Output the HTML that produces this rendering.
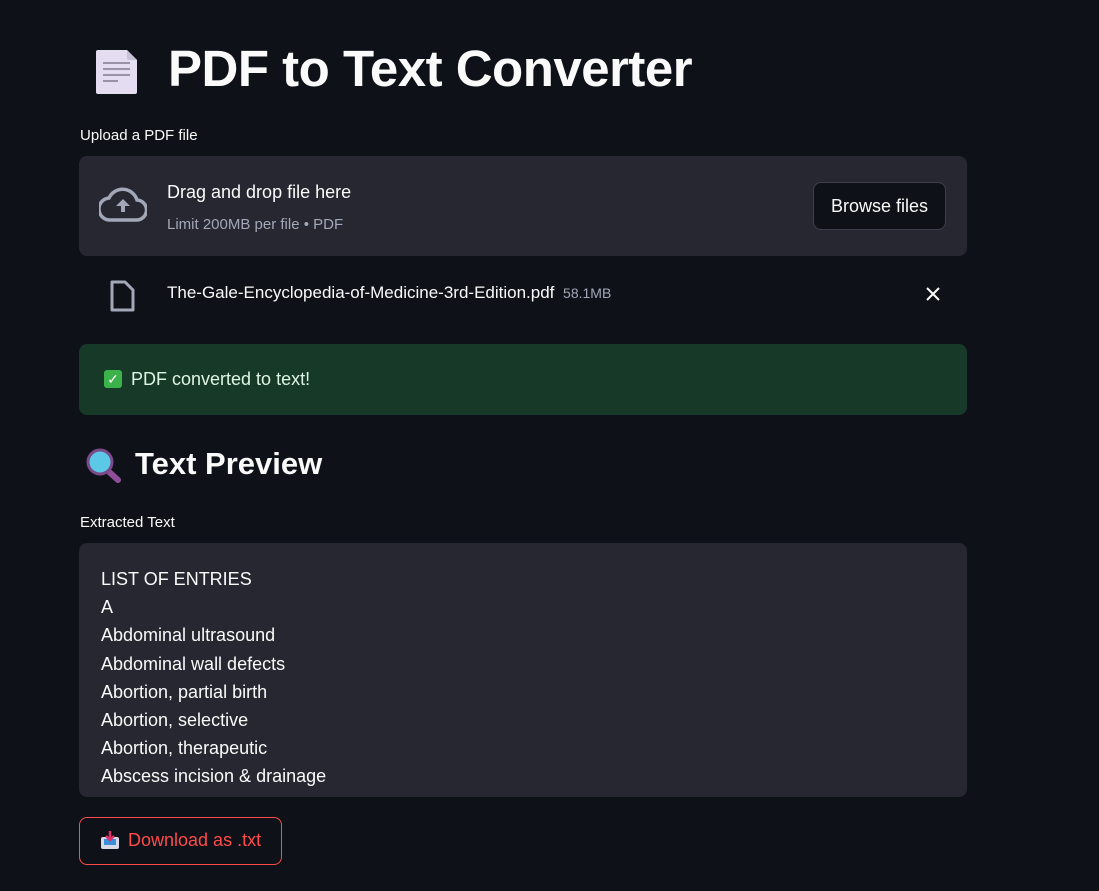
<!DOCTYPE html>
<html><head><meta charset="utf-8"><style>
body{margin:0;background:#0e1117;width:1099px;height:891px;overflow:hidden;font-family:"Liberation Sans",sans-serif;color:#fafafa;position:relative}
.a{position:absolute}
h1{position:absolute;left:168px;top:37px;margin:0;font-size:51px;font-weight:bold;letter-spacing:-0.5px;line-height:64px}
.lbl{font-size:15px;color:#fafafa}
.card{background:#262730;border-radius:8px}
</style></head><body>
<svg class="a" style="left:95px;top:49px" width="46" height="46" viewBox="0 0 46 46"><path d="M3 1h29l10 10v32a2 2 0 0 1-2 2H3a2 2 0 0 1-2-2V3a2 2 0 0 1 2-2z" fill="#e4dcf0"/><path d="M32 1v8a2 2 0 0 0 2 2h8z" fill="#c9c2d6"/><g stroke="#9a93a6" stroke-width="2"><line x1="8" y1="14" x2="35" y2="14"/><line x1="8" y1="20" x2="35" y2="20"/><line x1="8" y1="26" x2="35" y2="26"/><line x1="8" y1="32" x2="23" y2="32"/></g></svg>
<h1>PDF to Text Converter</h1>
<div class="a lbl" style="left:80px;top:127px">Upload a PDF file</div>
<div class="a card" style="left:79px;top:156px;width:888px;height:100px"></div>
<svg class="a" style="left:99px;top:186px" width="48" height="38" viewBox="0 0 48 38"><path d="M12 34h25a10 10 0 0 0 1-20A15 15 0 0 0 10 12 11 11 0 0 0 12 34z" fill="none" stroke="#a3a8b8" stroke-width="3.5"/><path d="M24 13l-7 7h5v6h4v-6h5z" fill="#a3a8b8"/></svg>
<div class="a" style="left:167px;top:182px;font-size:18px">Drag and drop file here</div>
<div class="a" style="left:167px;top:216px;font-size:15px;color:#a3a8b8">Limit 200MB per file • PDF</div>
<div class="a" style="left:813px;top:182px;width:131px;height:46px;border:1px solid #3d3f4a;border-radius:8px;background:#0e1117;font-size:18px;line-height:46px;text-align:center">Browse files</div>
<svg class="a" style="left:109px;top:279px" width="28" height="34" viewBox="0 0 28 34"><path d="M3 3h13l8 8v20H3z" fill="none" stroke="#a3a8b8" stroke-width="3" stroke-linejoin="round"/></svg>
<div class="a" style="left:167px;top:283px;font-size:17px">The-Gale-Encyclopedia-of-Medicine-3rd-Edition.pdf <span style="font-size:14px;color:#a3a8b8">&nbsp;58.1MB</span></div>
<svg class="a" style="left:925px;top:286px" width="16" height="16"><path d="M2 2l12 12M14 2L2 14" stroke="#fafafa" stroke-width="2"/></svg>
<div class="a" style="left:79px;top:344px;width:888px;height:71px;background:#173928;border-radius:8px"></div>
<div class="a" style="left:104px;top:370px;width:18px;height:18px;background:#3bb34a;border-radius:3px;color:#fff;font-size:14px;line-height:18px;text-align:center">✓</div>
<div class="a" style="left:131px;top:369px;font-size:18px;color:#dff5e3">PDF converted to text!</div>
<svg class="a" style="left:85px;top:448px" width="38" height="36" viewBox="0 0 38 36"><line x1="22" y1="22" x2="33" y2="32" stroke="#8e4f98" stroke-width="6" stroke-linecap="round"/><circle cx="15" cy="14" r="12" fill="#5bc8e8" stroke="#7a4a8a" stroke-width="3"/></svg>
<div class="a" style="left:135px;top:446px;font-size:31px;font-weight:bold">Text Preview</div>
<div class="a lbl" style="left:80px;top:514px">Extracted Text</div>
<div class="a card" style="left:79px;top:543px;width:888px;height:254px;overflow:hidden">
<div style="position:absolute;left:22px;top:22px;font-size:18px;line-height:28.2px">LIST OF ENTRIES<br>A<br>Abdominal ultrasound<br>Abdominal wall defects<br>Abortion, partial birth<br>Abortion, selective<br>Abortion, therapeutic<br>Abscess incision &amp; drainage</div></div>
<div class="a" style="left:79px;top:817px;width:201px;height:46px;border:1px solid #ff4b4b;border-radius:8px"></div>
<svg class="a" style="left:100px;top:830px" width="20" height="20" viewBox="0 0 20 20"><rect x="1" y="7" width="18" height="12" rx="2" fill="#d8d8e8"/><rect x="4" y="9" width="12" height="6" fill="#3a8fd8"/><path d="M10 1v8M6 6l4 4 4-4" stroke="#e0306a" stroke-width="2.5" fill="none"/></svg>
<div class="a" style="left:128px;top:830px;font-size:18px;color:#ff4b4b">Download as .txt</div>
</body></html>
